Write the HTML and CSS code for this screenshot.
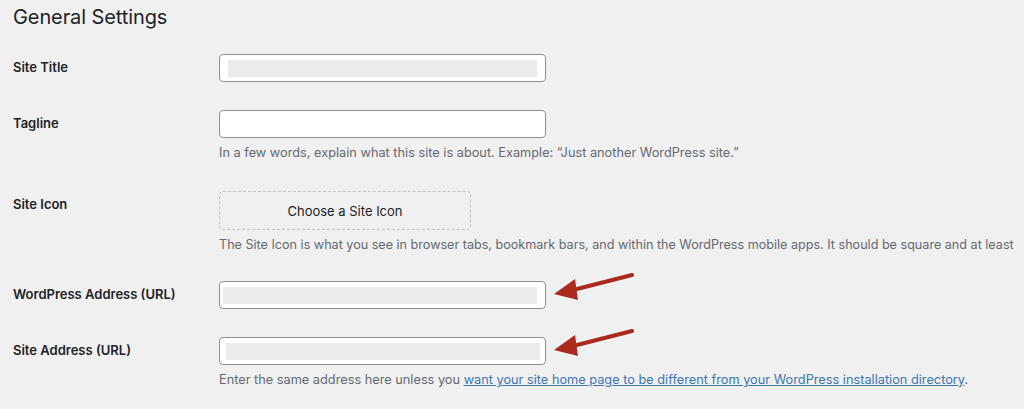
FILE: index.html
```html
<!DOCTYPE html>
<html lang="en">
<head>
  <meta charset="UTF-8">
  <meta name="viewport" content="width=device-width, initial-scale=1.0">
  <title>General Settings</title>
  <link rel="stylesheet" href="styles.css">
</head>
<body>
  <div class="wrap">
    <h1>General Settings</h1>

    <form class="settings">
      <div class="row">
        <label class="label" for="blogname">Site Title</label>
        <div class="field">
          <div class="input"><span class="blur"></span></div>
        </div>
      </div>

      <div class="row">
        <label class="label" for="blogdescription">Tagline</label>
        <div class="field">
          <div class="input"></div>
          <p class="desc">In a few words, explain what this site is about. Example: “Just another WordPress site.”</p>
        </div>
      </div>

      <div class="row row-icon">
        <label class="label">Site Icon</label>
        <div class="field">
          <button type="button" class="icon-btn">Choose a Site Icon</button>
          <p class="desc nowrap">The Site Icon is what you see in browser tabs, bookmark bars, and within the WordPress mobile apps. It should be square and at least</p>
        </div>
      </div>

      <div class="row">
        <label class="label" for="siteurl">WordPress Address (URL)</label>
        <div class="field">
          <div class="input"><span class="blur blur-wp"></span></div>
          <!-- red pointer next to the url field -->
          <svg class="pointer" width="90" height="34" viewBox="0 0 90 34">
            <line x1="83" y1="2" x2="20" y2="18" stroke="#a92b1f" stroke-width="4" stroke-linecap="round"/>
            <polygon points="5,21 26,6 29,27" fill="#a92b1f"/>
          </svg>
        </div>
      </div>

      <div class="row">
        <label class="label" for="home">Site Address (URL)</label>
        <div class="field">
          <div class="input"><span class="blur blur-home"></span></div>
          <svg class="pointer" width="90" height="34" viewBox="0 0 90 34">
            <line x1="83" y1="2" x2="20" y2="18" stroke="#a92b1f" stroke-width="4" stroke-linecap="round"/>
            <polygon points="5,21 26,6 29,27" fill="#a92b1f"/>
          </svg>
          <p class="desc">Enter the same address here unless you <a href="#">want your site home page to be different from your WordPress installation directory</a>.</p>
        </div>
      </div>
    </form>
  </div>
</body>
</html>
```

FILE: styles.css
```css
body {
  margin: 0;
  background-color: #f0f0f1;
  color: #1d2327;
  font-family: Inter, "Noto Sans", Arial, sans-serif;
  font-size: 13px;
  overflow: hidden;
}
.wrap {
  padding: 0 0 0 13px;
}
h1 {
  margin: 0;
  padding-top: 3px;
  font-size: 20px;
  font-weight: 400;
  line-height: 28px;
  letter-spacing: -0.1px;
}
.settings {
  margin-top: 9px;
}
.row {
  display: grid;
  grid-template-columns: 206px 1fr;
  padding: 14px 0;
}
.label {
  font-weight: 600;
  font-size: 13px;
  line-height: 26px;
}
.field {
  position: relative;
}
.input {
  width: 327px;
  height: 28px;
  box-sizing: border-box;
  background: #fff;
  border: 1px solid #8c8f94;
  border-radius: 4px;
  padding: 5px 8px;
}
.blur {
  display: block;
  height: 17px;
  background: #ebebeb;
}
.blur-wp {
  margin-left: -5px;
  margin-right: 0;
}
.blur-home {
  margin-left: -2px;
  margin-right: -3px;
}
.desc {
  margin: 6px 0 0;
  color: #646970;
  font-size: 12.75px;
  line-height: 17px;
}
.nowrap {
  white-space: nowrap;
  font-size: 12.6px;
}
.desc a {
  color: #3d76b0;
}
.row-icon {
  padding-top: 16px;
}
.icon-btn {
  display: block;
  width: 252px;
  height: 39px;
  background: transparent;
  border: 1px dashed #c3c4c7;
  border-radius: 4px;
  color: #1d2327;
  font-family: inherit;
  font-size: 13px;
  cursor: pointer;
}
.pointer {
  position: absolute;
  left: 330px;
  top: -8px;
}
```
